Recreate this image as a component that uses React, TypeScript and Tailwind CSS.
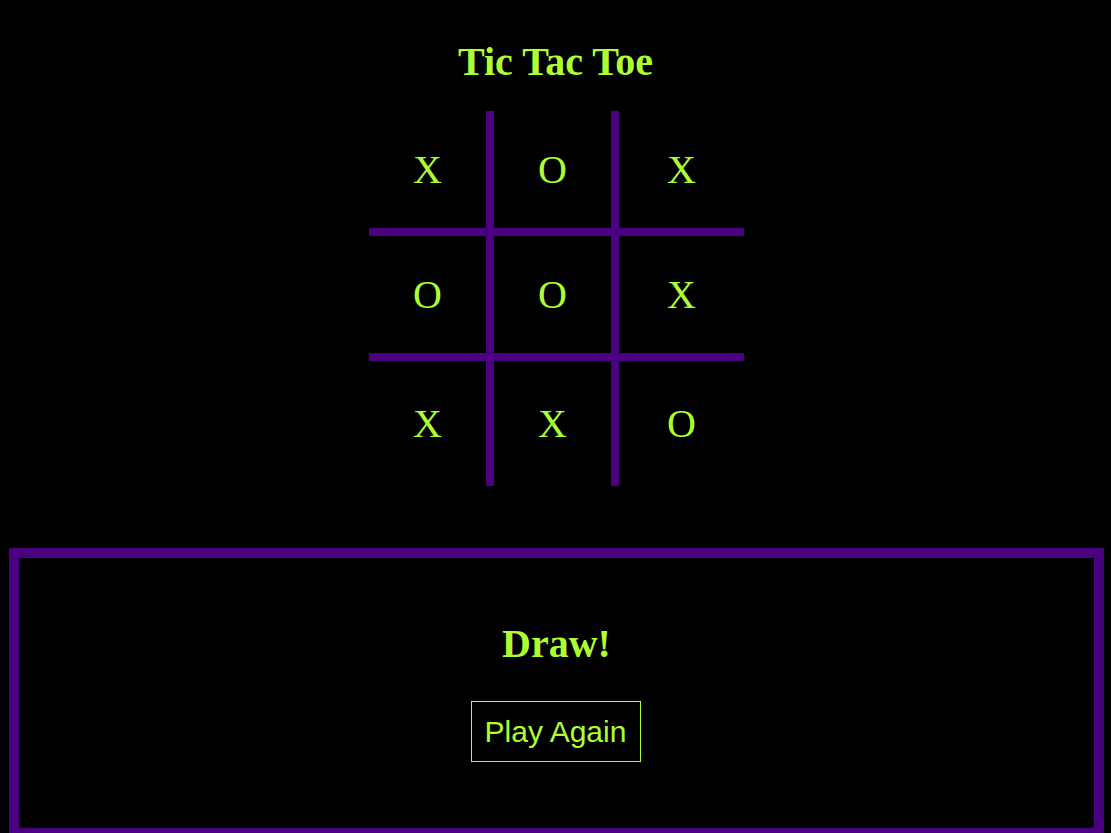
import React from "react";

const board = ["X", "O", "X", "O", "O", "X", "X", "X", "O"];

const serif = { fontFamily: '"Liberation Serif", "Times New Roman", serif' };

export default function App() {
    return (
        <div className="min-h-screen bg-black text-[#adff2f] overflow-hidden" style={serif}>
            <h1 className="pt-[42px] text-center text-[40px] leading-none font-bold">Tic Tac Toe</h1>

            <div className="mt-[29px] flex justify-center pl-[2px]">
                <div className="grid w-[375px] grid-cols-3">
                    {board.map((v, i) => {
                        const col = i % 3;
                        const row = Math.floor(i / 3);
                        return (
                            <div
                                key={i}
                                className={
                                    "flex h-[125px] items-center justify-center border-[#4b0082] text-[40px] leading-none " +
                                    (col < 2 ? "border-r-8 " : "") +
                                    (row < 2 ? "border-b-8" : "")
                                }
                            >
                                {v}
                            </div>
                        );
                    })}
                </div>
            </div>

            <div className="mt-[62px] ml-[9px] mr-[7px] flex h-[290px] flex-col items-center border-[10px] border-[#4b0082]">
                <h2 className="mt-[66px] text-[40px] leading-none font-bold">Draw!</h2>
                <button
                    className="mt-[37px] mr-[2px] flex h-[61px] w-[170px] items-center justify-center border border-[#adff2f] text-[30px] text-[#adff2f]"
                    style={{ fontFamily: '"Liberation Sans", Arial, sans-serif' }}
                >
                    Play Again
                </button>
            </div>
        </div>
    );
}
